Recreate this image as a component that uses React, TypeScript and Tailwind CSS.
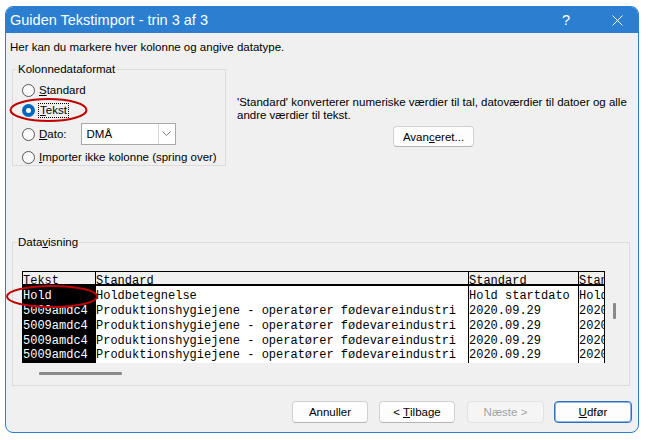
import React from "react";

const Radio = ({ checked }: { checked?: boolean }) =>
  checked ? (
    <span className="w-[13px] h-[13px] rounded-full bg-[#0067c0] flex items-center justify-center shrink-0">
      <span className="w-[5px] h-[5px] rounded-full bg-white" />
    </span>
  ) : (
    <span className="w-[13px] h-[13px] rounded-full border border-[#555555] bg-[#fafafa] shrink-0" />
  );

const Btn = ({
  children,
  w,
  variant,
}: {
  children: React.ReactNode;
  w: string;
  variant?: "default" | "disabled";
}) => {
  const base =
    "h-[22px] rounded-[4px] flex items-center justify-center leading-[14px] " + w + " ";
  if (variant === "default")
    return (
      <div className={base + "bg-[#fdfdfd] border border-[#2f6fbf] shadow-[inset_0_0_0_1px_#8fb5e3]"}>
        {children}
      </div>
    );
  if (variant === "disabled")
    return (
      <div className={base + "bg-[#f5f5f5] border border-[#e2e2e2] text-[#a3a3a3]"}>{children}</div>
    );
  return (
    <div className={base + "bg-[#fdfdfd] border border-[#d0d0d0] border-b-[#b5b5b5]"}>{children}</div>
  );
};

const mono = "font-['Liberation_Mono','Courier_New',monospace] text-[12px] whitespace-pre";

const Col = ({
  w,
  header,
  rows,
  dark,
  last,
}: {
  w: string;
  header: string;
  rows: string[];
  dark?: boolean;
  last?: boolean;
}) => (
  <div className={"flex flex-col shrink-0 overflow-hidden border-l border-black " + w + (last ? " border-r" : "")}>
    <div className={"h-[15px] bg-[#f0f0f0] border-b-2 border-black flex items-end " + mono}>
      <span className="leading-[6px]">{header}</span>
    </div>
    <div className={"flex-1 pt-[3px] " + (dark ? "bg-black text-white" : "bg-white text-black")}>
      {rows.map((r, i) => (
        <div key={i} className={mono + " leading-[14.75px]"}>
          {r}
        </div>
      ))}
    </div>
  </div>
);

export default function App() {
  const prod = "Produktionshygiejene - operatører fødevareindustri";
  return (
    <div className="relative w-[649px] h-[440px] bg-white pt-[6px] pl-[5px] font-['Liberation_Sans',Arial,sans-serif] text-[11.5px] text-black">
      <div className="w-[634px] h-[427px] border border-[#2b7ed0] rounded-[8px] overflow-hidden flex flex-col bg-[#f0f0f0]">
        {/* Title bar */}
        <div className="h-[26px] shrink-0 bg-[#2b7ed0] flex items-center pl-[4px] text-white text-[14.5px]">
          <span className="leading-[18px]">Guiden Tekstimport - trin 3 af 3</span>
          <span className="ml-auto w-[20px] mr-[31px] text-center leading-[18px]">?</span>
          <span className="w-[20px] mr-[11px] flex items-center justify-center">
            <svg width="11" height="11" viewBox="0 0 11 11">
              <path d="M0.5 0.5 L10.5 10.5 M10.5 0.5 L0.5 10.5" stroke="white" strokeWidth="1" />
            </svg>
          </span>
        </div>

        {/* Intro */}
        <div className="mt-[7px] pl-[4px] leading-[14px] h-[14px]">
          Her kan du markere hver kolonne og angive datatype.
        </div>

        {/* Top row */}
        <div className="mt-[8px] flex">
          <fieldset className="ml-[6px] w-[214px] h-[104px] border border-[#dcdcdc] shrink-0">
            <legend className="ml-[4px] px-[1px] leading-[14px]">Kolonnedataformat</legend>
            <div className="pl-[9px]">
              <div className="mt-[7px] flex items-center h-[14px]">
                <Radio />
                <span className="ml-[4px] leading-[14px]">
                  <span className="underline">S</span>tandard
                </span>
              </div>
              <div className="mt-[6px] flex items-center h-[14px]">
                <Radio checked />
                <span className="ml-[3px] leading-[13px] border border-dotted border-black px-[1px]">
                  <span className="underline">T</span>ekst
                </span>
              </div>
              <div className="mt-[6px] flex items-center h-[22px]">
                <Radio />
                <span className="ml-[4px] leading-[14px]">
                  <span className="underline">D</span>ato:
                </span>
                <div className="ml-[14px] w-[95px] h-[22px] bg-white border border-[#a8a8a8] flex items-center">
                  <span className="pl-[5px] flex-1 leading-[14px]">DMÅ</span>
                  <div className="w-[17px] h-[20px] border-l border-[#d6d6d6] flex items-center justify-center">
                    <svg width="9" height="6" viewBox="0 0 9 6">
                      <path d="M0.5 0.5 L4.5 4.5 L8.5 0.5" stroke="#7a7a7a" strokeWidth="1" fill="none" />
                    </svg>
                  </div>
                </div>
              </div>
              <div className="mt-[5px] flex items-center h-[14px]">
                <Radio />
                <span className="ml-[4px] leading-[14px]">
                  <span className="underline">I</span>mporter ikke kolonne (spring over)
                </span>
              </div>
            </div>
          </fieldset>

          <div className="ml-[11px] w-[393px] mt-[34px] flex flex-col">
            <div className="leading-[13px] whitespace-nowrap">
              'Standard' konverterer numeriske værdier til tal, datoværdier til datoer og alle
              <br />
              andre værdier til tekst.
            </div>
            <div className="mt-[4px] flex justify-center">
              <div className="w-[81px] h-[21px] rounded-[4px] bg-[#fdfdfd] border border-[#d0d0d0] border-b-[#b5b5b5] flex items-center justify-center leading-[14px]">
                Avan<span className="underline">c</span>eret...
              </div>
            </div>
          </div>
        </div>

        {/* Datavisning */}
        <fieldset className="mt-[69px] ml-[6px] w-[618px] h-[151px] border border-[#dcdcdc] shrink-0">
          <legend className="ml-[4px] px-[1px] leading-[14px]">
            Data<span className="underline">v</span>isning
          </legend>
          <div className="mt-[22px] pl-[9px] flex">
            <div className="w-[583px] h-[92px] flex border-t border-black overflow-hidden">
              <Col w="w-[73px]" header="Tekst" dark rows={["Hold", "5009amdc4", "5009amdc4", "5009amdc4", "5009amdc4"]} />
              <Col w="w-[373px]" header="Standard" rows={["Holdbetegnelse", prod, prod, prod, prod]} />
              <Col w="w-[110px]" header="Standard" rows={["Hold startdato", "2020.09.29", "2020.09.29", "2020.09.29", "2020.09.29"]} />
              <Col w="w-[27px]" header="Standard" last rows={["Hold startdato", "2020.09.29", "2020.09.29", "2020.09.29", "2020.09.29"]} />
            </div>
            <div className="ml-[8px] mt-[32px] w-[3px] h-[16px] bg-[#8a8a8a] rounded-[1px]" />
          </div>
          <div className="mt-[9px] ml-[26px] w-[83px] h-[3px] bg-[#8a8a8a] rounded-[1px]" />
        </fieldset>

        {/* Buttons */}
        <div className="mt-[15px] flex justify-end pr-[6px]">
          <Btn w="w-[76px]">Annuller</Btn>
          <div className="ml-[11px]">
            <Btn w="w-[76px]">
              &lt; <span className="underline ml-[3px]">T</span>ilbage
            </Btn>
          </div>
          <div className="ml-[12px]">
            <Btn w="w-[77px]" variant="disabled">
              Næste &gt;
            </Btn>
          </div>
          <div className="ml-[10px]">
            <Btn w="w-[78px]" variant="default">
              <span className="underline">U</span>dfør
            </Btn>
          </div>
        </div>
      </div>

      {/* Red annotation ellipses */}
      <svg className="absolute left-0 top-0 pointer-events-none" width="649" height="440">
        <ellipse cx="48.5" cy="110" rx="38" ry="11" fill="none" stroke="#c00000" strokeWidth="2" />
        <ellipse cx="52" cy="296.5" rx="45" ry="10.5" fill="none" stroke="#c00000" strokeWidth="2" />
      </svg>
    </div>
  );
}
